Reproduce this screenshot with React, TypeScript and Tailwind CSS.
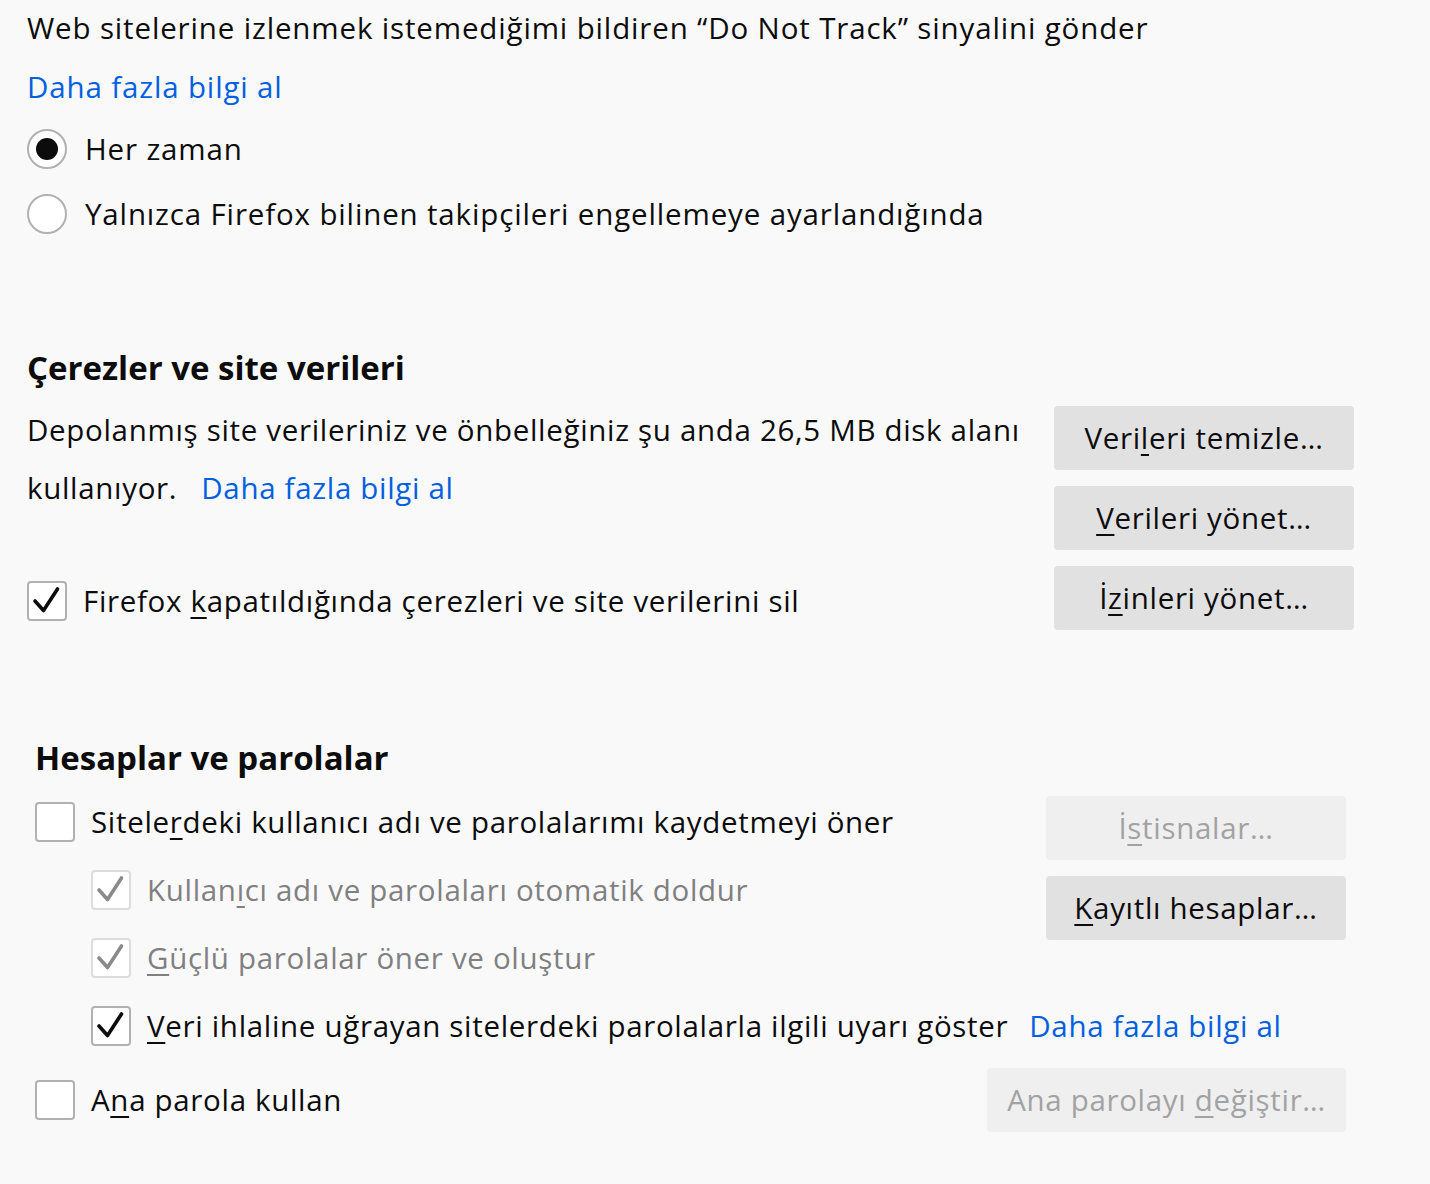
import clsx from 'clsx';

function Radio({ checked }: { checked?: boolean }) {
  return (
    <span className="flex h-[40px] w-[40px] shrink-0 items-center justify-center rounded-full border-2 border-[#b1b1b3] bg-white">
      {checked && <span className="h-[22px] w-[22px] rounded-full bg-[#0c0c0d]" />}
    </span>
  );
}

function Checkbox({ checked, disabled }: { checked?: boolean; disabled?: boolean }) {
  return (
    <span
      className={clsx(
        'flex h-[40px] w-[40px] shrink-0 items-center justify-center rounded-[4px] border-2 bg-white',
        disabled ? 'border-[#dcdcde]' : 'border-[#b1b1b3]'
      )}
    >
      {checked && (
        <svg width="36" height="36" viewBox="0 0 36 36" fill="none">
          <path
            d="M6 18 L14.5 27.5 L28.5 6"
            stroke={disabled ? '#8a8a8b' : '#0c0c0d'}
            strokeWidth="3.6"
            strokeLinecap="round"
            strokeLinejoin="round"
          />
        </svg>
      )}
    </span>
  );
}

// access key underline
function K({ children }: { children: string }) {
  return <span className="underline decoration-2 underline-offset-[5px]">{children}</span>;
}

function Button({ children, disabled, wide = true }: { children: React.ReactNode; disabled?: boolean; wide?: boolean }) {
  return (
    <button
      className={clsx(
        'flex h-[64px] shrink-0 items-center justify-center rounded-[4px]',
        wide ? 'w-[300px]' : 'px-[20px]',
        disabled ? 'bg-[#efeff0] text-[#a2a2a3]' : 'bg-[#e1e1e2] text-[#0c0c0d]'
      )}
    >
      {children}
    </button>
  );
}

function Link({ children, className }: { children: React.ReactNode; className?: string }) {
  return <a className={clsx('text-[#0060df]', className)}>{children}</a>;
}

export default function App() {
  return (
    <div className="min-h-screen w-[1430px] bg-[#f9f9fa] font-['Open_Sans',sans-serif] text-[29.5px] tracking-[0.85px] text-[#0c0c0d]">
      {/* Do Not Track */}
      <section className="flex flex-col gap-[3px] pl-[27px]">
        <div className="flex h-[56px] items-center">
          Web sitelerine izlenmek istemediğimi bildiren “Do Not Track” sinyalini gönder
        </div>
        <div className="flex h-[56px] items-center">
          <Link>Daha fazla bilgi al</Link>
        </div>
        <label className="flex h-[62px] items-center gap-[18px]">
          <Radio checked />
          Her zaman
        </label>
        <label className="flex h-[62px] items-center gap-[18px]">
          <Radio />
          Yalnızca Firefox bilinen takipçileri engellemeye ayarlandığında
        </label>
      </section>

      {/* Cookies */}
      <section className="mt-[95px] pl-[27px] pr-[76px] tracking-[0.68px]">
        <h2 className="flex h-[56px] items-center text-[33px] font-bold tracking-normal">Çerezler ve site verileri</h2>
        <div className="mt-[5px] flex gap-[20px]">
          <div className="flex-1">
            <p className="leading-[58px]">
              Depolanmış site verileriniz ve önbelleğiniz şu anda 26,5 MB disk alanı kullanıyor.
              <Link className="ml-[24px]">Daha fazla bilgi al</Link>
            </p>
            <label className="mt-[53px] flex h-[62px] items-center gap-[16px]">
              <Checkbox checked />
              <span>
                Firefox <K>k</K>apatıldığında çerezleri ve site verilerini sil
              </span>
            </label>
          </div>
          <div className="flex flex-col gap-[16px] pt-[5px]">
            <Button>
              <span>
                Veri<K>l</K>eri temizle…
              </span>
            </Button>
            <Button>
              <span>
                <K>V</K>erileri yönet…
              </span>
            </Button>
            <Button>
              <span>
                İ<K>z</K>inleri yönet…
              </span>
            </Button>
          </div>
        </div>
      </section>

      {/* Logins */}
      <section className="mt-[98px] pl-[35px] pr-[84px] tracking-[0.68px]">
        <h2 className="flex h-[56px] items-center text-[33px] font-bold tracking-normal">Hesaplar ve parolalar</h2>
        <div className="mt-[2px] flex gap-[20px]">
          <div className="flex min-w-0 flex-1 flex-col whitespace-nowrap">
            <label className="flex h-[68px] items-center gap-[16px]">
              <Checkbox />
              <span>
                Sitele<K>r</K>deki kullanıcı adı ve parolalarımı kaydetmeyi öner
              </span>
            </label>
            <div className="flex flex-col pl-[56px]">
              <label className="flex h-[68px] items-center gap-[16px] text-[#808081]">
                <Checkbox checked disabled />
                <span>
                  Kullan<K>ı</K>cı adı ve parolaları otomatik doldur
                </span>
              </label>
              <label className="flex h-[68px] items-center gap-[16px] text-[#808081]">
                <Checkbox checked disabled />
                <span>
                  <K>G</K>üçlü parolalar öner ve oluştur
                </span>
              </label>
              <label className="flex h-[68px] items-center gap-[16px]">
                <Checkbox checked />
                <span>
                  <K>V</K>eri ihlaline uğrayan sitelerdeki parolalarla ilgili uyarı göster
                </span>
                <Link className="ml-[5px]">Daha fazla bilgi al</Link>
              </label>
            </div>
          </div>
          <div className="flex flex-col gap-[16px] pt-[8px]">
            <Button disabled>
              <span>
                İ<K>s</K>tisnalar…
              </span>
            </Button>
            <Button>
              <span>
                <K>K</K>ayıtlı hesaplar…
              </span>
            </Button>
          </div>
        </div>
        <div className="mt-[8px] flex h-[64px] items-center justify-between">
          <label className="flex items-center gap-[16px]">
            <Checkbox />
            <span>
              A<K>n</K>a parola kullan
            </span>
          </label>
          <Button disabled wide={false}>
            <span>
              Ana parolayı <K>d</K>eğiştir…
            </span>
          </Button>
        </div>
      </section>
    </div>
  );
}
